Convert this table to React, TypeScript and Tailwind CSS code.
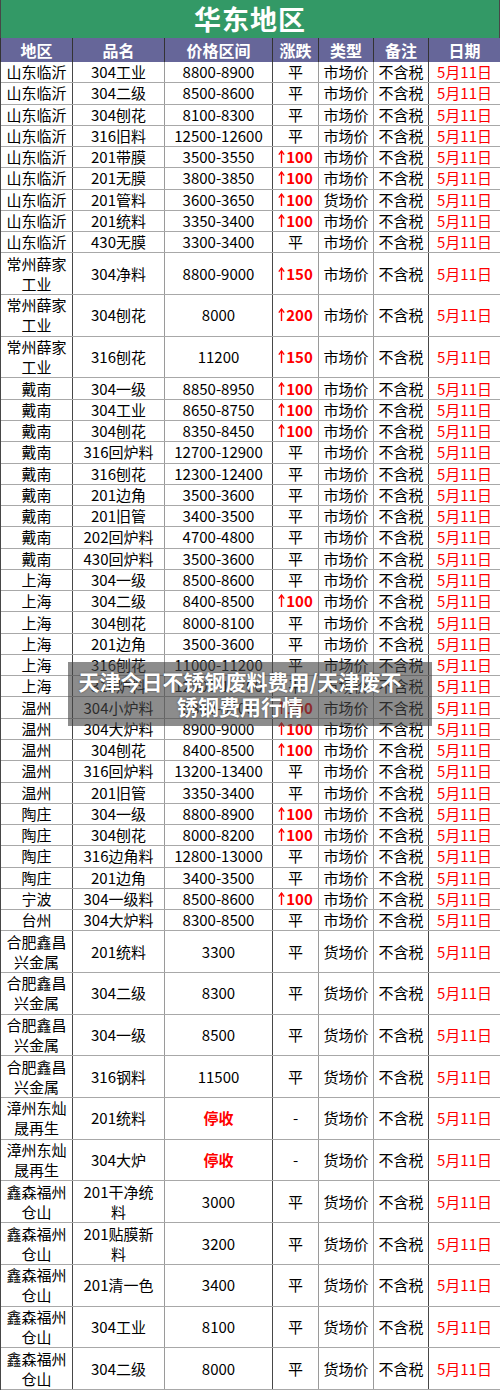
import React from "react";

type Row = {
  region: string;
  name: string;
  price: string;
  change: string;
  type: string;
};

const rows: Row[] = [
  { region: "山东临沂", name: "304工业", price: "8800-8900", change: "平", type: "市场价" },
  { region: "山东临沂", name: "304二级", price: "8500-8600", change: "平", type: "市场价" },
  { region: "山东临沂", name: "304刨花", price: "8100-8300", change: "平", type: "市场价" },
  { region: "山东临沂", name: "316旧料", price: "12500-12600", change: "平", type: "市场价" },
  { region: "山东临沂", name: "201带膜", price: "3500-3550", change: "100", type: "市场价" },
  { region: "山东临沂", name: "201无膜", price: "3800-3850", change: "100", type: "市场价" },
  { region: "山东临沂", name: "201管料", price: "3600-3650", change: "100", type: "货场价" },
  { region: "山东临沂", name: "201统料", price: "3350-3400", change: "100", type: "市场价" },
  { region: "山东临沂", name: "430无膜", price: "3300-3400", change: "平", type: "市场价" },
  { region: "常州薛家\n工业", name: "304净料", price: "8800-9000", change: "150", type: "市场价" },
  { region: "常州薛家\n工业", name: "304刨花", price: "8000", change: "200", type: "市场价" },
  { region: "常州薛家\n工业", name: "316刨花", price: "11200", change: "150", type: "市场价" },
  { region: "戴南", name: "304一级", price: "8850-8950", change: "100", type: "市场价" },
  { region: "戴南", name: "304工业", price: "8650-8750", change: "100", type: "市场价" },
  { region: "戴南", name: "304刨花", price: "8350-8450", change: "100", type: "市场价" },
  { region: "戴南", name: "316回炉料", price: "12700-12900", change: "平", type: "市场价" },
  { region: "戴南", name: "316刨花", price: "12300-12400", change: "平", type: "市场价" },
  { region: "戴南", name: "201边角", price: "3500-3600", change: "平", type: "市场价" },
  { region: "戴南", name: "201旧管", price: "3400-3500", change: "平", type: "市场价" },
  { region: "戴南", name: "202回炉料", price: "4700-4800", change: "平", type: "市场价" },
  { region: "戴南", name: "430回炉料", price: "3500-3600", change: "平", type: "市场价" },
  { region: "上海", name: "304一级", price: "8500-8600", change: "平", type: "市场价" },
  { region: "上海", name: "304二级", price: "8400-8500", change: "100", type: "市场价" },
  { region: "上海", name: "304刨花", price: "8000-8100", change: "平", type: "市场价" },
  { region: "上海", name: "201边角", price: "3500-3600", change: "平", type: "市场价" },
  { region: "上海", name: "316刨花", price: "11000-11200", change: "平", type: "市场价" },
  { region: "上海", name: "316炉料", price: "12500-12700", change: "平", type: "市场价" },
  { region: "温州", name: "304小炉料", price: "8800-8900", change: "100", type: "市场价" },
  { region: "温州", name: "304大炉料", price: "8900-9000", change: "100", type: "市场价" },
  { region: "温州", name: "304刨花", price: "8400-8500", change: "100", type: "市场价" },
  { region: "温州", name: "316回炉料", price: "13200-13400", change: "平", type: "市场价" },
  { region: "温州", name: "201旧管", price: "3350-3400", change: "平", type: "市场价" },
  { region: "陶庄", name: "304一级", price: "8800-8900", change: "100", type: "市场价" },
  { region: "陶庄", name: "304刨花", price: "8000-8200", change: "100", type: "市场价" },
  { region: "陶庄", name: "316边角料", price: "12800-13000", change: "平", type: "市场价" },
  { region: "陶庄", name: "201边角", price: "3400-3500", change: "平", type: "市场价" },
  { region: "宁波", name: "304一级料", price: "8500-8600", change: "100", type: "市场价" },
  { region: "台州", name: "304大炉料", price: "8300-8500", change: "平", type: "市场价" },
  { region: "合肥鑫昌\n兴金属", name: "201统料", price: "3300", change: "平", type: "货场价" },
  { region: "合肥鑫昌\n兴金属", name: "304二级", price: "8300", change: "平", type: "货场价" },
  { region: "合肥鑫昌\n兴金属", name: "304一级", price: "8500", change: "平", type: "货场价" },
  { region: "合肥鑫昌\n兴金属", name: "316钢料", price: "11500", change: "平", type: "货场价" },
  { region: "漳州东灿\n晟再生", name: "201统料", price: "停收", change: "-", type: "货场价" },
  { region: "漳州东灿\n晟再生", name: "304大炉", price: "停收", change: "-", type: "货场价" },
  { region: "鑫森福州\n仓山", name: "201干净统\n料", price: "3000", change: "平", type: "货场价" },
  { region: "鑫森福州\n仓山", name: "201贴膜新\n料", price: "3200", change: "平", type: "货场价" },
  { region: "鑫森福州\n仓山", name: "201清一色", price: "3400", change: "平", type: "货场价" },
  { region: "鑫森福州\n仓山", name: "304工业", price: "8100", change: "平", type: "货场价" },
  { region: "鑫森福州\n仓山", name: "304二级", price: "8000", change: "平", type: "货场价" },
];

const headers = ["地区", "品名", "价格区间", "涨跌", "类型", "备注", "日期"];

const grid = "grid grid-cols-[72px_92px_108px_46px_55px_55px_72px]";
const dark = "border-r border-[#474747]";
const gray = "border-r border-[#9a9a9a]";
const colBorders = [dark, gray, dark, gray, gray, dark, dark];

function UpArrow() {
  return (
    <svg width="7" height="14" viewBox="0 0 7 14" className="mr-[1px]">
      <path d="M3.5 1 L3.5 13" stroke="#ff0000" strokeWidth="1.4" />
      <path d="M0.8 4.6 L3.5 1 L6.2 4.6" stroke="#ff0000" strokeWidth="1.3" fill="none" />
    </svg>
  );
}

function Cell({ i, children }: { i: number; children: React.ReactNode }) {
  return (
    <div
      className={`${colBorders[i]} flex items-center justify-center text-center whitespace-pre-line leading-[20px]`}
    >
      {children}
    </div>
  );
}

export default function App() {
  return (
    <div className="relative w-[500px] bg-white font-['Noto_Sans_CJK_SC',sans-serif] text-[15px] text-black">
      <div className="h-[38px] bg-[#339966] flex items-center justify-center text-white font-bold text-[27px] tracking-[1px] border-x border-[#474747]">
        华东地区
      </div>
      <div className={`${grid} h-[24px] bg-[#666699] text-white font-bold text-[16px] border-l border-[#333]`}>
        {headers.map((h, i) => (
          <div key={h} className="flex items-center justify-center border-r border-[#333] leading-[20px]">
            {h}
          </div>
        ))}
      </div>
      <div className="border-l border-[#474747]">
        {rows.map((r, idx) => {
          const tall = r.region.includes("\n");
          return (
            <div
              key={idx}
              className={`${grid} ${tall ? "h-[41.7px]" : "h-[21.27px]"} border-b border-[#a8a8a8]`}
            >
              <Cell i={0}>{r.region}</Cell>
              <Cell i={1}>{r.name}</Cell>
              <Cell i={2}>
                {r.price === "停收" ? (
                  <span className="text-[#ff0000] font-bold">停收</span>
                ) : (
                  r.price
                )}
              </Cell>
              <Cell i={3}>
                {r.change === "平" || r.change === "-" ? (
                  r.change
                ) : (
                  <span className="flex items-center text-[#ff0000] font-bold">
                    <UpArrow />
                    {r.change}
                  </span>
                )}
              </Cell>
              <Cell i={4}>{r.type}</Cell>
              <Cell i={5}>不含税</Cell>
              <Cell i={6}>
                <span className="text-[#ff0000]">5月11日</span>
              </Cell>
            </div>
          );
        })}
      </div>
      <div className="absolute left-[68px] top-[662px] w-[364px] h-[64px] bg-[rgba(70,70,70,0.62)] flex items-center justify-center pr-[20px]">
        <div className="text-white font-bold text-[21px] leading-[25px] text-center [text-shadow:0_0_2px_rgba(0,0,0,0.5)]">
          天津今日不锈钢废料费用/天津废不
          <br />
          锈钢费用行情
        </div>
      </div>
    </div>
  );
}
